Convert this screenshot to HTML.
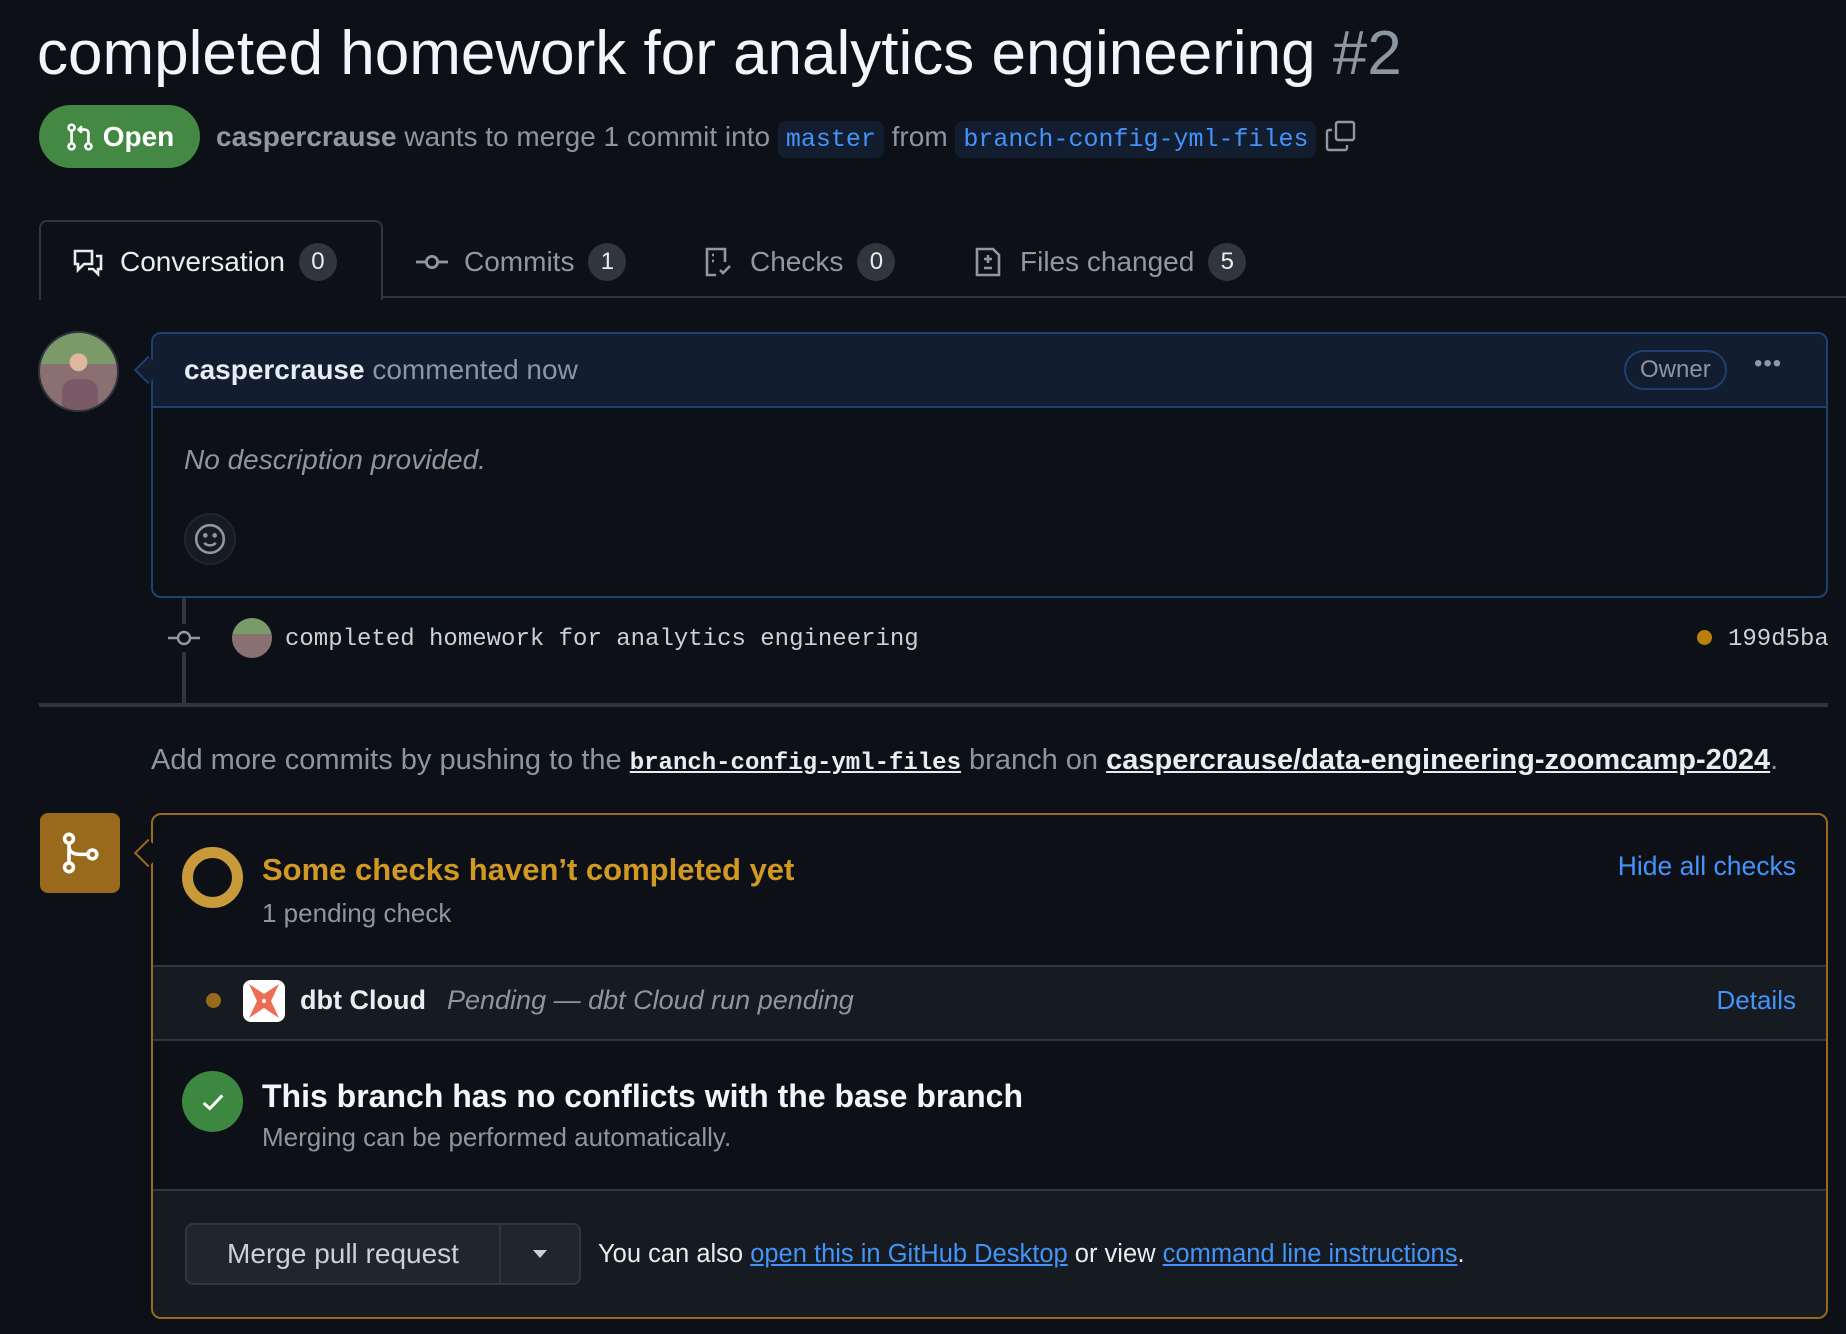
<!DOCTYPE html>
<html><head><meta charset="utf-8">
<style>
*{box-sizing:border-box;margin:0;padding:0}
body{width:1846px;height:1334px;background:#0d1117;color:#e6edf3;font-family:"Liberation Sans",sans-serif;position:relative;overflow:hidden}
.a{position:absolute;white-space:nowrap}
.mono{font-family:"Liberation Mono",monospace}
.muted{color:#8d96a0}
.blue{color:#4493f8}
.cnt{display:inline-block;background:#31363d;color:#e6edf3;border-radius:20px;height:38px;line-height:38px;min-width:38px;text-align:center;font-size:24px;padding:0 10px;vertical-align:middle;margin-left:14px}
.tab{position:absolute;top:226px;height:72px;display:flex;align-items:center;font-size:28px;color:#9198a1}
.tab svg{margin-right:16px}
</style></head><body>

<div class="a" style="left:37px;top:18px;font-size:62px;line-height:72px;color:#f0f6fc">completed homework for analytics engineering <span style="color:#8d96a0">#2</span></div>

<div class="a" style="left:39px;top:105px;width:161px;height:63px;border-radius:32px;background:#438843;display:flex;align-items:center;justify-content:center;font-size:28px;font-weight:bold;color:#fff">
<svg width="30" height="30" viewBox="0 0 16 16" style="margin-right:8px"><g fill="none" stroke="#fff" stroke-width="1.4"><circle cx="3.5" cy="3" r="1.6"/><circle cx="3.5" cy="13" r="1.6"/><circle cx="12.5" cy="13" r="1.6"/><path d="M3.5 4.6v6.8M12.5 11.4V6a2 2 0 0 0-2-2H7.5M9 2.3 7.3 4 9 5.7"/></g></svg>Open</div>

<div class="a muted" style="left:216px;top:118px;font-size:28px;line-height:38px"><b style="color:#9198a1">caspercrause</b> wants to merge 1 commit into <span class="mono blue" style="background:#121d2f;border-radius:8px;padding:4px 8px;font-size:25px">master</span> from <span class="mono blue" style="background:#121d2f;border-radius:8px;padding:4px 8px;font-size:25px">branch-config-yml-files</span></div>
<svg class="a" style="left:1325px;top:120px" width="32" height="32" viewBox="0 0 16 16" fill="none" stroke="#9198a1" stroke-width="1.2"><rect x="5.5" y="1" width="9" height="9" rx="1"/><path d="M3.5 5H2a1 1 0 0 0-1 1v8a1 1 0 0 0 1 1h8a1 1 0 0 0 1-1v-1.5"/></svg>

<!-- tabs -->
<div class="a" style="left:382px;top:296px;width:1464px;height:2px;background:#30363d"></div>
<div class="a" style="left:39px;top:220px;width:344px;height:80px;border:2px solid #30363d;border-bottom:none;border-radius:8px 8px 0 0;background:#0d1117"></div>
<div class="tab" style="left:72px;color:#e6edf3"><svg width="32" height="32" viewBox="0 0 16 16" fill="none" stroke="#e6edf3" stroke-width="1.3"><path d="M1.5 2.5h8.5v6.5H6l-3 3V9H1.5z"/><path d="M12 5h2.5v6.5H13v2.5l-2.5-2.5H8"/></svg>Conversation<span class="cnt">0</span></div>
<div class="tab" style="left:416px"><svg width="32" height="32" viewBox="0 0 16 16" fill="none" stroke="#9198a1" stroke-width="1.4"><circle cx="8" cy="8" r="2.8"/><path d="M0 8h5.2M10.8 8H16"/></svg>Commits<span class="cnt">1</span></div>
<div class="tab" style="left:702px"><svg width="32" height="32" viewBox="0 0 16 16" fill="none" stroke="#9198a1" stroke-width="1.3"><path d="M7 14.5H2.5v-13h9V8"/><path d="M5 4.5h1M5 7.5h1M9 12l1.5 1.5L14 10"/></svg>Checks<span class="cnt">0</span></div>
<div class="tab" style="left:972px"><svg width="32" height="32" viewBox="0 0 16 16" fill="none" stroke="#9198a1" stroke-width="1.3"><path d="M2.5 1.5h8l3 3v10h-11z"/><path d="M8 4.5v4M6 6.5h4M6 11h4"/></svg>Files changed<span class="cnt">5</span></div>

<!-- avatar -->
<div class="a" style="left:38px;top:331px;width:81px;height:81px;border-radius:50%;border:2px solid #30363d;background:radial-gradient(circle at 50% 38%,#e0b8a0 0 14%,transparent 15%),linear-gradient(#7a9a6a 0 40%,#8a7070 40% 100%);overflow:hidden"><div style="position:absolute;left:22px;top:46px;width:36px;height:40px;border-radius:12px;background:#7a5a66"></div></div>

<!-- comment box -->
<div class="a" style="left:151px;top:332px;width:1677px;height:266px;border:2px solid #1f4170;border-radius:10px;overflow:hidden">
 <div style="height:74px;background:#121d2f;border-bottom:2px solid #1f4170"></div>
</div>
<div class="a" style="left:138px;top:360px;width:20px;height:20px;background:#121d2f;border-left:2px solid #1f4170;border-bottom:2px solid #1f4170;transform:rotate(45deg)"></div>
<div class="a" style="left:184px;top:352px;font-size:28px;line-height:36px"><b>caspercrause</b> <span class="muted">commented now</span></div>
<div class="a muted" style="left:1624px;top:350px;height:40px;line-height:36px;border:2px solid #1f4170;border-radius:20px;padding:0 14px;font-size:24px">Owner</div>
<div class="a muted" style="left:1754px;top:350px;font-size:24px;letter-spacing:1px;color:#9198a1">•••</div>
<div class="a muted" style="left:184px;top:444px;font-size:28px;font-style:italic">No description provided.</div>
<div class="a" style="left:184px;top:513px;width:52px;height:52px;border-radius:50%;background:#161b22;border:2px solid #21262d;display:flex;align-items:center;justify-content:center"><svg width="34" height="34" viewBox="0 0 16 16" fill="none" stroke="#9198a1" stroke-width="1.2"><circle cx="8" cy="8" r="6.5"/><path d="M5.3 9.8c1.4 1.6 4 1.6 5.4 0"/><circle cx="5.8" cy="6.3" r=".5" fill="#9198a1"/><circle cx="10.2" cy="6.3" r=".5" fill="#9198a1"/></svg></div>

<!-- timeline -->
<div class="a" style="left:182px;top:598px;width:4px;height:106px;background:#30363d"></div>
<div class="a" style="left:168px;top:624px;width:34px;height:28px;background:#0d1117"></div>
<svg class="a" style="left:168px;top:624px" width="32" height="28" viewBox="0 0 32 28" fill="none" stroke="#9198a1" stroke-width="2.4"><circle cx="16" cy="14" r="6"/><path d="M0 14h10M22 14h10"/></svg>
<div class="a" style="left:232px;top:618px;width:40px;height:40px;border-radius:50%;background:linear-gradient(#7a9a6a 0 40%,#8a7070 40%)"></div>
<div class="a mono" style="left:285px;top:626px;font-size:24px;color:#c9d1d9">completed homework for analytics engineering</div>
<div class="a" style="left:1697px;top:630px;width:15px;height:15px;border-radius:50%;background:#bb8009"></div>
<div class="a mono" style="left:1728px;top:626px;font-size:24px;color:#c9d1d9">199d5ba</div>

<div class="a" style="left:39px;top:703px;width:1789px;height:4px;background:#30363d"></div>

<div class="a muted" style="left:151px;top:744px;font-size:29px">Add more commits by pushing to the <b class="mono" style="color:#e6edf3;text-decoration:underline;font-size:24px">branch-config-yml-files</b> branch on <b style="color:#e6edf3;text-decoration:underline">caspercrause/data-engineering-zoomcamp-2024</b>.</div>

<!-- merge box -->
<div class="a" style="left:40px;top:813px;width:80px;height:80px;border-radius:8px;background:#9a6a1c;display:flex;align-items:center;justify-content:center"><svg width="44" height="44" viewBox="0 0 16 16" fill="none" stroke="#fff" stroke-width="1.3"><circle cx="4" cy="2.8" r="1.6"/><circle cx="4" cy="13.2" r="1.6"/><circle cx="12.5" cy="8.5" r="1.6"/><path d="M4 4.4v7.2M4 5.5c0 2 1.5 3 4 3h2.9"/></svg></div>
<div class="a" style="left:151px;top:813px;width:1677px;height:506px;border:2px solid #9a6a1c;border-radius:10px;overflow:hidden">
 <div style="position:absolute;left:0;top:150px;width:100%;height:2px;background:#30363d"></div>
 <div style="position:absolute;left:0;top:152px;width:100%;height:72px;background:#161b22"></div>
 <div style="position:absolute;left:0;top:224px;width:100%;height:2px;background:#30363d"></div>
 <div style="position:absolute;left:0;top:374px;width:100%;height:2px;background:#30363d"></div>
 <div style="position:absolute;left:0;top:376px;width:100%;height:130px;background:#161b22"></div>
</div>
<div class="a" style="left:138px;top:843px;width:20px;height:20px;background:#0d1117;border-left:2px solid #9a6a1c;border-bottom:2px solid #9a6a1c;transform:rotate(45deg)"></div>

<div class="a" style="left:182px;top:847px;width:61px;height:61px;border-radius:50%;border:11px solid #c99a3c"></div>
<div class="a" style="left:262px;top:852px;font-size:31px;font-weight:bold;color:#d29922">Some checks haven’t completed yet</div>
<div class="a muted" style="left:262px;top:898px;font-size:26px">1 pending check</div>
<div class="a blue" style="right:50px;top:851px;font-size:26.5px">Hide all checks</div>

<div class="a" style="left:206px;top:993px;width:15px;height:15px;border-radius:50%;background:#9a6a1c"></div>
<div class="a" style="left:243px;top:980px;width:42px;height:42px;border-radius:8px;background:#fff;overflow:hidden"><svg width="42" height="42" viewBox="0 0 42 42"><path d="M6 4 21 14 36 4 28 21 36 38 21 28 6 38 14 21z" fill="#ec6d52"/><circle cx="21" cy="21" r="2" fill="#fff"/></svg></div>
<div class="a" style="left:300px;top:985px;font-size:27px;font-weight:bold">dbt Cloud</div>
<div class="a muted" style="left:447px;top:985px;font-size:27px;font-style:italic">Pending — dbt Cloud run pending</div>
<div class="a blue" style="right:50px;top:985px;font-size:26px">Details</div>

<div class="a" style="left:182px;top:1071px;width:61px;height:61px;border-radius:50%;background:#3d8840;display:flex;align-items:center;justify-content:center"><svg width="30" height="30" viewBox="0 0 16 16" fill="none" stroke="#fff" stroke-width="1.6"><path d="M3 8.5 6.3 11.5 13 4.5"/></svg></div>
<div class="a" style="left:262px;top:1078px;font-size:32px;font-weight:bold;color:#f0f6fc">This branch has no conflicts with the base branch</div>
<div class="a muted" style="left:262px;top:1122px;font-size:26px">Merging can be performed automatically.</div>

<div class="a" style="left:185px;top:1223px;width:396px;height:62px;border:2px solid #30363d;border-radius:8px;background:#21262d;display:flex">
 <div style="width:314px;border-right:2px solid #30363d;display:flex;align-items:center;justify-content:center;font-size:28px;color:#c9d1d9">Merge pull request</div>
 <div style="flex:1;display:flex;align-items:center;justify-content:center"><svg width="18" height="12" viewBox="0 0 18 12"><path d="M2 2h14l-7 8z" fill="#c9d1d9"/></svg></div>
</div>
<div class="a" style="left:598px;top:1240px;font-size:25.5px">You can also <span class="blue" style="text-decoration:underline">open this in GitHub Desktop</span> or view <span class="blue" style="text-decoration:underline">command line instructions</span>.</div>

</body></html>
